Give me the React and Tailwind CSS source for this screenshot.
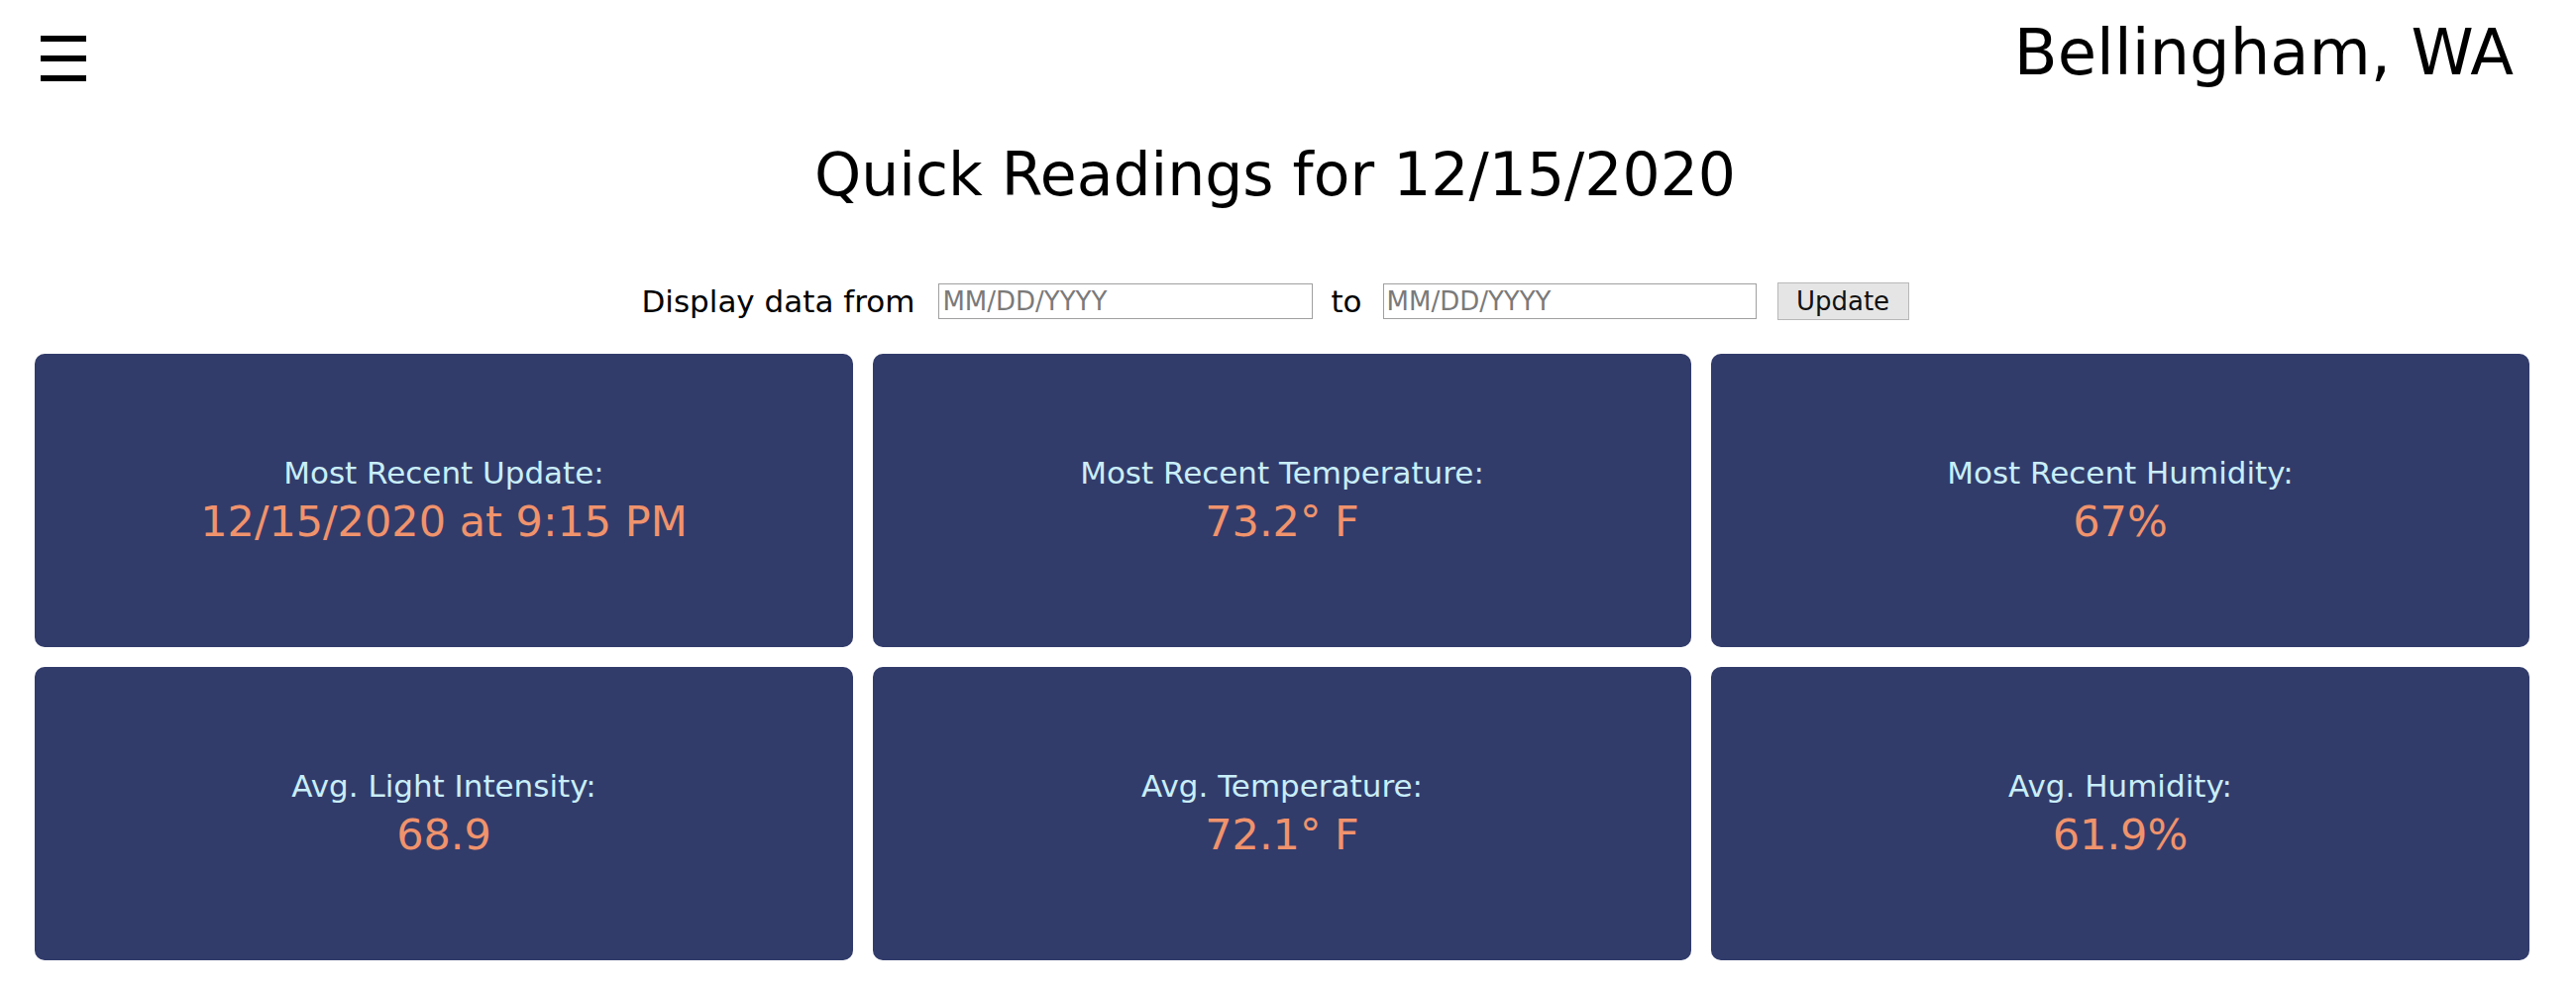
import React from "react";

const readings = [
  { label: "Most Recent Update:", value: "12/15/2020 at 9:15 PM" },
  { label: "Most Recent Temperature:", value: "73.2° F" },
  { label: "Most Recent Humidity:", value: "67%" },
  { label: "Avg. Light Intensity:", value: "68.9" },
  { label: "Avg. Temperature:", value: "72.1° F" },
  { label: "Avg. Humidity:", value: "61.9%" },
];

const ReadingCard = ({ label, value }) => (
  <div className="h-[296px] rounded-[10px] bg-[#323c6b] flex flex-col items-center justify-center">
    <div className="text-[31px] leading-none text-[#c9eef9]">{label}</div>
    <div className="mt-[12px] text-[43px] leading-none text-[#f0936c]">{value}</div>
  </div>
);

export default function App() {
  return (
    <div className="min-h-screen bg-white text-black font-['DejaVu_Sans',sans-serif]">
      {/* Top bar */}
      <header className="flex justify-between items-start pt-[21px] pl-[41px] pr-[63px]">
        <button className="mt-[15px] flex flex-col gap-[14px]" aria-label="Menu">
          <span className="block w-[46px] h-[6px] bg-black" />
          <span className="block w-[46px] h-[6px] bg-black" />
          <span className="block w-[46px] h-[6px] bg-black" />
        </button>
        <h2 className="text-[64px] leading-none">Bellingham, WA</h2>
      </header>

      {/* Title */}
      <h1 className="mt-[61px] pr-[26px] text-center text-[60px] leading-none">
        Quick Readings for 12/15/2020
      </h1>

      {/* Date range filter */}
      <div className="mt-[79px] pr-[26px] flex items-center justify-center">
        <span className="text-[31px] leading-none">Display data from</span>
        <input
          type="text"
          placeholder="MM/DD/YYYY"
          className="ml-[24px] w-[378px] h-[36px] px-[3px] border border-[#a0a0a0] text-[26px] placeholder:text-[#7a7a7a] outline-none"
        />
        <span className="ml-[18px] text-[31px] leading-none">to</span>
        <input
          type="text"
          placeholder="MM/DD/YYYY"
          className="ml-[21px] w-[377px] h-[36px] px-[3px] border border-[#a0a0a0] text-[26px] placeholder:text-[#7a7a7a] outline-none"
        />
        <button className="ml-[21px] w-[133px] h-[38px] bg-[#e5e5e5] border border-[#b8b8b8] text-[26px] leading-none text-[#111]">
          Update
        </button>
      </div>

      {/* Readings */}
      <div className="mt-[34px] pl-[35px] pr-[47px] grid grid-cols-3 gap-[20px]">
        {readings.map((r) => (
          <ReadingCard key={r.label} label={r.label} value={r.value} />
        ))}
      </div>
    </div>
  );
}
